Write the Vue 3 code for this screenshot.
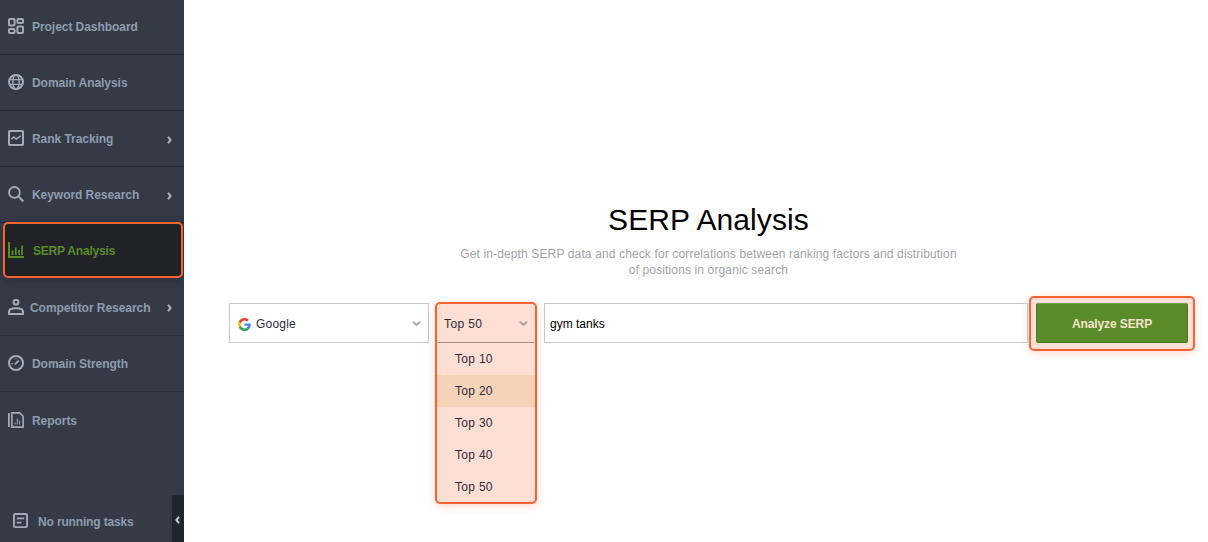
<script setup>
const items = [
  { label: 'Project Dashboard', icon: 'grid' },
  { label: 'Domain Analysis', icon: 'globe' },
  { label: 'Rank Tracking', icon: 'chart', arrow: true },
  { label: 'Keyword Research', icon: 'search', arrow: true },
  { label: 'SERP Analysis', icon: 'bars', active: true },
  { label: 'Competitor Research', icon: 'user', arrow: true, tall: true },
  { label: 'Domain Strength', icon: 'gauge' },
  { label: 'Reports', icon: 'report' }
]
const options = ['Top 10', 'Top 20', 'Top 30', 'Top 40', 'Top 50']
</script>

<template>
  <div class="page">
    <aside class="sidebar">
      <nav class="nav">
        <a
          v-for="item in items"
          :key="item.label"
          class="nav-item"
          :class="{ active: item.active, tall: item.tall }"
        >
          <svg class="nav-icon" viewBox="0 0 16 16" fill="none" stroke="currentColor" stroke-width="2">
            <template v-if="item.icon === 'grid'">
              <rect x="1" y="1" width="5.6" height="6.6" rx="1" />
              <rect x="9.4" y="1" width="5.6" height="4" rx="1" />
              <rect x="1" y="11" width="5.6" height="4" rx="1" />
              <rect x="9.4" y="8.4" width="5.6" height="6.6" rx="1" />
            </template>
            <template v-else-if="item.icon === 'globe'">
              <circle cx="8" cy="8" r="7" />
              <ellipse cx="8" cy="8" rx="3.2" ry="7" stroke-width="1.4" />
              <path d="M1 5.6h14M1 10.4h14" stroke-width="1.4" />
            </template>
            <template v-else-if="item.icon === 'chart'">
              <rect x="1" y="1" width="14" height="14" rx="0.6" />
              <path d="M3.4 9.200l2.400-2.200 2.400 2 4.400-3.200" stroke-width="1.500" />
            </template>
            <template v-else-if="item.icon === 'search'">
              <circle cx="6.400" cy="6.400" r="5.400" stroke-width="1.800" />
              <path d="M10.400 10.400l5 5" stroke-width="2" />
            </template>
            <template v-else-if="item.icon === 'bars'">
              <path d="M1 0v15h15" />
              <path d="M4.500 8.500v4.500M7.800 5.500v7.500M11 8v5M14 3.500v9.500" stroke-width="1.800" />
            </template>
            <template v-else-if="item.icon === 'user'">
              <circle cx="8" cy="3.200" r="2.400" />
              <path d="M1 15v-2.500c0-2 2.400-3.300 7-3.300s7 1.300 7 3.300v2.500z" />
            </template>
            <template v-else-if="item.icon === 'gauge'">
              <circle cx="8" cy="8" r="7" />
              <path d="M6.800 9.400l4-3.800" stroke-width="1.800" />
              <path d="M3.400 8.600h1.400M8 3.400v.8" stroke-width="1.400" />
            </template>
            <template v-else>
              <path d="M0.900 1v14" stroke-width="1.800" />
              <path d="M3.900 0.900h7.800l3.400 3.400v10.800h-11.200z" stroke-width="1.600" />
              <path d="M7 12.500v-2M9.300 12.500v-6M11.600 12.500v-4" stroke-width="1" />
            </template>
          </svg>
          <span class="nav-label">{{ item.label }}</span>
          <svg v-if="item.arrow" class="nav-arrow" viewBox="0 0 5 8" fill="none" stroke="currentColor" stroke-width="2">
            <path d="M1 0.800l2.600 3.200L1 7.200" />
          </svg>
        </a>
      </nav>
      <div class="tasks">
        <svg class="task-icon" viewBox="0 0 16 16" fill="none" stroke="currentColor" stroke-width="2">
          <rect x="1" y="1" width="14" height="14" rx="1.500" />
          <path d="M4 5.800h8M4 10.200h5" stroke-width="1.800" />
        </svg>
        <span class="task-label">No running tasks</span>
        <button class="collapse">
          <svg viewBox="0 0 5 8" fill="none" stroke="currentColor" stroke-width="2">
            <path d="M4 0.800L1.400 4 4 7.200" />
          </svg>
        </button>
      </div>
    </aside>

    <main class="main">
      <h1 class="title">SERP Analysis</h1>
      <p class="subtitle">Get in-depth SERP data and check for correlations between ranking factors and distribution of positions in organic search</p>
      <div class="form">
        <div class="select engine">
          <svg class="google" viewBox="0 0 48 48">
            <path fill="#EA4335" d="M24 9.500c3.500 0 6.700 1.200 9.200 3.600l6.900-6.900C35.900 2.400 30.500 0 24 0 14.600 0 6.500 5.400 2.600 13.200l8 6.200C12.400 13.700 17.700 9.500 24 9.500z" />
            <path fill="#4285F4" d="M47 24.500c0-1.600-.2-3.100-.4-4.500H24v9h12.900c-.6 3-2.200 5.500-4.700 7.200l7.700 6c4.500-4.200 7.100-10.300 7.100-17.700z" />
            <path fill="#FBBC05" d="M10.500 28.600c-.5-1.400-.8-3-.8-4.600s.3-3.200.8-4.600l-8-6.200C.9 16.500 0 20.100 0 24s.9 7.500 2.600 10.800l7.900-6.200z" />
            <path fill="#34A853" d="M24 48c6.500 0 11.900-2.100 15.900-5.800l-7.700-6c-2.100 1.400-4.900 2.300-8.200 2.300-6.300 0-11.600-4.200-13.500-9.900l-8 6.200C6.500 42.600 14.600 48 24 48z" />
          </svg>
          <span>Google</span>
          <svg class="chev" viewBox="0 0 9 5" fill="none" stroke="currentColor" stroke-width="2">
            <path d="M0.800 0.800L4.500 3.800 8.200 0.800" />
          </svg>
        </div>

        <div class="range">
          <div class="select range-select">
            <span>Top 50</span>
            <svg class="chev" viewBox="0 0 9 5" fill="none" stroke="currentColor" stroke-width="2">
              <path d="M0.800 0.800L4.500 3.800 8.200 0.800" />
            </svg>
          </div>
          <ul class="menu">
            <li v-for="o in options" :key="o" :class="{ hover: o === 'Top 20' }">{{ o }}</li>
          </ul>
          <div class="mark"></div>
        </div>

        <input class="query" type="text" value="gym tanks" />

        <div class="submit">
          <div class="mark mark-button"></div>
          <button class="analyze">Analyze SERP</button>
        </div>
      </div>
    </main>
  </div>
</template>

<style>
html, body { margin: 0; overflow: hidden; background: #fff; }
</style>

<style scoped>
.page {
  display: flex;
  height: 542px;
  font-family: "Liberation Sans", Arial, sans-serif;
}
.sidebar {
  width: 184px;
  flex: none;
  background: #343b47;
  display: flex;
  flex-direction: column;
  justify-content: space-between;
  color: #8f9bae;
  overflow: hidden;
}
.nav { display: flex; flex-direction: column; margin-top: -1px; }
.nav-item {
  position: relative;
  box-sizing: border-box;
  height: 56px;
  display: flex;
  align-items: center;
  padding: 1px 12px 0 8px;
  border-bottom: 1px solid #282e38;
  font-size: 12px;
  font-weight: 700;
  letter-spacing: -0.05px;
}
.nav-item.tall { height: 57px; }
.nav-item.tall .nav-label { margin-left: 6px; }
.nav-item:last-child { border-bottom: 0; }
.nav-item.active {
  margin: -1px 1px 1px 3px;
  height: 56px;
  padding-left: 3px;
  background: #202228;
  border: 2px solid #f96332;
  border-radius: 5px;
  color: #5b8c25;
  letter-spacing: -0.2px;
  box-shadow: 0 2px 8px rgba(20, 20, 20, 0.35);
}
.nav-item.active .nav-label { margin-left: 9px; }
.nav-icon { width: 16px; height: 16px; flex: none; color: #a3adba; margin-top: -2px; }
.active .nav-icon { color: #5b8c25; }
.nav-label { margin-left: 8px; flex: 1; white-space: nowrap; }
.nav-arrow { width: 5px; height: 8px; color: #aab4c2; margin-top: 1px; }

.tasks {
  position: relative;
  height: 47px;
  display: flex;
  align-items: center;
  padding-left: 13px;
  font-size: 12px;
  font-weight: 700;
  letter-spacing: -0.15px;
}
.task-icon { width: 15px; height: 15px; color: #a3adba; margin-top: 4px; }
.task-label { margin-left: 10px; margin-top: 6px; }
.collapse {
  position: absolute;
  right: 0;
  top: 0;
  width: 12px;
  height: 47px;
  padding: 0 1px 0 0;
  border: 0;
  background: #1f262e;
  color: #c4cbd5;
  display: flex;
  align-items: center;
  justify-content: center;
}
.collapse svg { width: 5px; height: 8px; margin-top: 2px; }

.main {
  flex: 1;
  box-sizing: border-box;
  padding: 202px 20px 0 45px;
  display: flex;
  flex-direction: column;
  align-items: center;
  min-width: 0;
}
.title {
  margin: 0;
  font-size: 30px;
  line-height: 36px;
  font-weight: 400;
  letter-spacing: 0.1px;
  color: #000;
}
.subtitle {
  margin: 8px 0 0;
  width: 504px;
  text-align: center;
  font-size: 12px;
  line-height: 16px;
  letter-spacing: 0.13px;
  color: #a3a3a8;
}
.form {
  margin-top: 25px;
  width: 100%;
  display: flex;
  gap: 8px;
  font-size: 12px;
  color: #2c2c3a;
}
.select {
  box-sizing: border-box;
  height: 40px;
  display: flex;
  align-items: center;
  background: #fff;
  border: 1px solid #c8c8c8;
  padding: 2px 7px 0 8px;
  letter-spacing: 0.2px;
}
.select span { flex: 1; }
.engine { width: 200px; flex: none; }
.google { width: 13px; height: 13px; margin-right: 5px; }
.chev { width: 9px; height: 5px; color: #a8a8ac; margin-top: -2px; }
.range { position: relative; width: 99px; flex: none; }
.range-select {
  width: 98px;
  padding: 2px 6px 0 6px;
  background: #ffded4;
  border-color: #ffded4;
  border-bottom-color: #a88f88;
  letter-spacing: 0.4px;
}
.menu {
  position: absolute;
  left: 0;
  top: 40px;
  width: 98px;
  margin: 0;
  padding: 0;
  list-style: none;
  background: #ffded4;
  letter-spacing: 0.3px;
}
.menu li {
  height: 32px;
  line-height: 32px;
  padding-left: 18px;
}
.menu li.hover { background: #f6d2b8; }
.mark {
  position: absolute;
  left: -2px;
  top: -1px;
  width: 102px;
  height: 202px;
  box-sizing: border-box;
  border: 2px solid #f96332;
  border-radius: 5px;
  box-shadow: 0 2px 8px rgba(249, 99, 50, 0.25);
  pointer-events: none;
}
.query {
  box-sizing: border-box;
  flex: 1;
  min-width: 0;
  height: 40px;
  margin: 0;
  padding: 2px 5px 0;
  border: 1px solid #c8c8c8;
  outline: 0;
  font-family: inherit;
  font-size: 12px;
  color: #000;
  background: #fff;
}
.submit { position: relative; width: 152px; flex: none; }
.analyze {
  position: relative;
  width: 100%;
  height: 40px;
  border: 1px solid #4c7a24;
  border-top-color: #75a03f;
  border-radius: 2px;
  background: #5b8c2a;
  color: #f5e2cb;
  font-family: inherit;
  font-size: 12px;
  font-weight: 700;
  letter-spacing: -0.1px;
  padding: 2px 0 0;
}
.mark-button {
  left: -7px;
  top: -7px;
  width: 166px;
  height: 55px;
  background: rgba(249, 99, 50, 0.2);
}
</style>
